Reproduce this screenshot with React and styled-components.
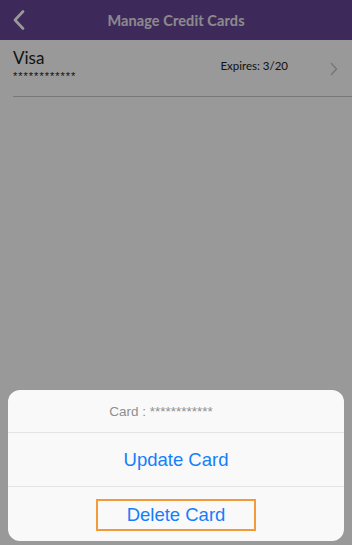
import React from 'react';
import styled, { createGlobalStyle } from 'styled-components';

const GlobalStyle = createGlobalStyle`
  html, body {
    margin: 0;
    padding: 0;
    background: #fff;
  }
  * {
    box-sizing: border-box;
  }
`;

function App() {
  return (
    <Page>
      <GlobalStyle />
      <Header>
        <BackButton aria-label="Back">
          <svg width="12" height="20" viewBox="0 0 12 20">
            <path
              d="M10 1.5 L2 10 L10 18.5"
              fill="none"
              stroke="#fff"
              strokeWidth="2.6"
              strokeLinecap="round"
              strokeLinejoin="round"
            />
          </svg>
        </BackButton>
        <Title>Manage Credit Cards</Title>
      </Header>

      <CardRow>
        <CardInfo>
          <CardName>Visa</CardName>
          <CardNumber>************</CardNumber>
        </CardInfo>
        <Expires>Expires: 3/20</Expires>
        <svg width="8" height="14" viewBox="0 0 8 14">
          <path
            d="M1.5 1.5 L6.5 7 L1.5 12.5"
            fill="none"
            stroke="#c7c7cc"
            strokeWidth="1.6"
            strokeLinecap="round"
            strokeLinejoin="round"
          />
        </svg>
      </CardRow>

      <Backdrop>
        <Sheet>
          <SheetTitle>Card : ************</SheetTitle>
          <SheetAction>
            <ActionLabel>Update Card</ActionLabel>
          </SheetAction>
          <SheetAction>
            <ActionLabel highlighted>Delete Card</ActionLabel>
          </SheetAction>
        </Sheet>
      </Backdrop>
    </Page>
  );
}

export default App;

const Page = styled.div`
  position: relative;
  width: 352px;
  height: 545px;
  overflow: hidden;
  background: #fff;
  font-family: 'Lato', 'Open Sans', sans-serif;
`;

const Header = styled.div`
  display: flex;
  align-items: center;
  justify-content: center;
  position: relative;
  height: 40px;
  background-color: #684796;
`;

const BackButton = styled.span`
  position: absolute;
  left: 13px;
  top: 10px;
  display: flex;
`;

const Title = styled.h1`
  margin: 0;
  font-size: 14.5px;
  font-weight: 700;
  color: #e9e5ee;
  letter-spacing: 0.1px;
`;

const CardRow = styled.div`
  display: flex;
  align-items: flex-start;
  margin-left: 13px;
  padding: 7px 14px 0 0;
  height: 57px;
  border-bottom: 1px solid #c8c8c8;
`;

const CardInfo = styled.div`
  display: flex;
  flex-direction: column;
  flex: 1;
`;

const CardName = styled.span`
  font-size: 17px;
  color: #222;
  line-height: 21px;
`;

const CardNumber = styled.span`
  margin-top: 2px;
  font-family: 'Liberation Sans', sans-serif;
  font-size: 11px;
  color: #222;
  line-height: 12px;
  letter-spacing: 1px;
`;

const Expires = styled.span`
  margin-top: 12px;
  margin-right: 42px;
  font-size: 11.5px;
  color: #222;

  & + svg {
    margin-top: 15px;
  }
`;

const Backdrop = styled.div`
  position: absolute;
  inset: 0;
  display: flex;
  flex-direction: column;
  justify-content: flex-end;
  padding: 0 8px 4px;
  background-color: rgba(0, 0, 0, 0.4);
`;

const Sheet = styled.div`
  display: flex;
  flex-direction: column;
  background-color: #f9f9f9;
  border-radius: 12px;
  overflow: hidden;
  font-family: 'Liberation Sans', 'Roboto', sans-serif;
`;

const SheetTitle = styled.div`
  display: flex;
  align-items: center;
  justify-content: center;
  height: 42px;
  padding-right: 30px;
  font-size: 13.5px;
  color: #8f8f8f;
`;

const SheetAction = styled.div`
  display: flex;
  align-items: center;
  justify-content: center;
  height: 54px;
  border-top: 1px solid #e3e3e3;
  cursor: pointer;

  &:last-child {
    height: 55px;
    padding-bottom: 9px;
    padding-top: 11px;
  }
`;

const ActionLabel = styled.span`
  display: flex;
  align-items: center;
  justify-content: center;
  font-size: 18.5px;
  color: #147efb;
  ${(props) =>
    props.highlighted &&
    `
      width: 160px;
      height: 32px;
      border: 2px solid #f39a3a;
    `}
`;
